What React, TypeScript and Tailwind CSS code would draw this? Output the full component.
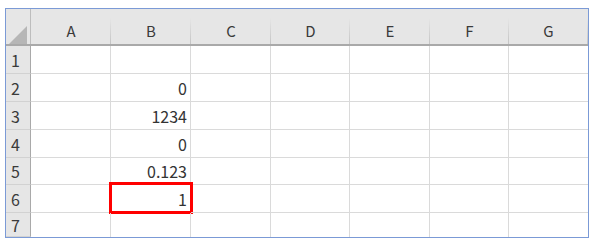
import React from 'react';

const cols = [
  { id: 'A', w: 'w-[80px]' },
  { id: 'B', w: 'w-[80px]' },
  { id: 'C', w: 'w-[80px]' },
  { id: 'D', w: 'w-[79px]' },
  { id: 'E', w: 'w-[80px]' },
  { id: 'F', w: 'w-[79px]' },
  { id: 'G', w: 'w-[79px]' },
];

const rows = [
  { n: 1, h: 'h-[28px]', b: '' },
  { n: 2, h: 'h-[28px]', b: '0' },
  { n: 3, h: 'h-[28px]', b: '1234' },
  { n: 4, h: 'h-[28px]', b: '0' },
  { n: 5, h: 'h-[27px]', b: '0.123' },
  { n: 6, h: 'h-[28px]', b: '1' },
  { n: 7, h: 'h-[24px]', b: '' },
];

const font = { fontFamily: '"Noto Sans CJK JP", "Noto Sans", sans-serif' };

const App: React.FC = () => {
  return (
    <div className="w-[595px] h-[242px] bg-white pt-[8px] pl-[5px]" style={font}>
      <div className="w-[584px] border border-[#7b9ad6] bg-white">
        {/* column header */}
        <div className="flex h-[37px] bg-[#e6e6e6] border-b-2 border-[#a9a9a9]">
          <div className="relative w-[25px] shrink-0 border-r border-[#bdbdbd]">
            <svg className="absolute left-[3px] top-[17px]" width="18" height="18" viewBox="0 0 18 18">
              <polygon points="18,0 18,18 0,18" fill="#b6b6b6" />
            </svg>
          </div>
          {cols.map((c) => (
            <div key={c.id} className={`relative ${c.w} shrink-0 flex items-end justify-center pb-[6px] text-[15px] leading-none text-[#3a3a3a]`}>
              {c.id}
              <div className="absolute right-0 top-[9px] bottom-0 w-px bg-gradient-to-b from-[#e6e6e6] to-[#c4c4c4]" />
            </div>
          ))}
        </div>
        {rows.map((r) => (
          <div key={r.n} className={`flex ${r.h}`}>
            <div className="w-[25px] shrink-0 bg-[#e6e6e6] border-r border-[#a9a9a9] border-b border-b-[#d2d2d2] flex items-center pl-[5px] text-[16px] leading-none text-[#3a3a3a]">
              {r.n}
            </div>
            {cols.map((c, i) => (
              <div
                key={c.id}
                className={`relative ${c.w} shrink-0 ${i < 6 ? 'border-r' : ''} ${r.n < 7 ? 'border-b' : ''} border-[#dadada] flex items-center justify-end pr-[3px] text-[16px] leading-none text-[#333333]`}
              >
                {c.id === 'B' ? r.b : ''}
                {c.id === 'B' && r.n === 6 && (
                  <div className="absolute -left-[2px] -top-[3px] -right-[3px] -bottom-[2px] border-[3px] border-[#ff0000]" />
                )}
              </div>
            ))}
          </div>
        ))}
      </div>
    </div>
  );
};

export default App;
